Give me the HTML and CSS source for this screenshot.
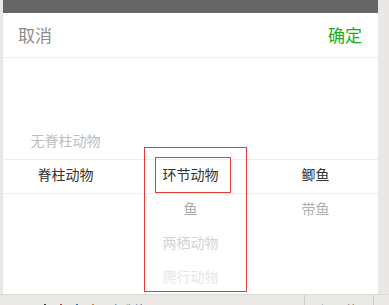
FILE: index.html
```html
<!DOCTYPE html>
<html lang="zh">
<head>
<meta charset="utf-8">
<link rel="stylesheet" href="styles.css">
</head>
<body>
<div class="screen">
  <div class="side side-left"></div>
  <div class="panel">
    <div class="topbar"></div>
    <div class="header">
      <span class="cancel">取消</span>
      <span class="ok">确定</span>
    </div>
    <div class="picker">
      <div class="col col-left">
        <div class="item near">无脊柱动物</div>
        <div class="item sel">脊柱动物</div>
      </div>
      <div class="col col-mid">
        <div class="item sel">环节动物</div>
        <div class="item near1">鱼</div>
        <div class="item far">两栖动物</div>
        <div class="item farther">爬行动物</div>
      </div>
      <div class="col col-right">
        <div class="item sel">鲫鱼</div>
        <div class="item near2">带鱼</div>
      </div>
      <div class="indicator"></div>
    </div>
  </div>
  <div class="side side-right"></div>
  <div class="hl hl-outer"></div>
  <div class="hl hl-inner"></div>
</div>
<div class="bottombar">
  <div class="bb-left">
    <span class="dot d1"></span><span class="dot d2"></span><span class="dot d3"></span><span class="dot d4"></span>
    <span class="link">复制打开</span>
  </div>
  <div class="bb-mid">经目值</div>
  <div class="bb-right"></div>
</div>
</body>
</html>
```

FILE: styles.css
```css
* { box-sizing: border-box; }
html, body {
  margin: 0;
  padding: 0;
  width: 389px;
  height: 305px;
  overflow: hidden;
  background: #ebe9e5;
  font-family: "Noto Sans CJK SC", "Noto Sans", sans-serif;
}
.screen {
  position: relative;
  display: flex;
  height: 294px;
}
.side {
  background: #e9e8e4;
}
.side-left { width: 3px; }
.side-right { width: 11px; }
.panel {
  width: 375px;
  display: flex;
  flex-direction: column;
  background: #fff;
}
.topbar {
  height: 13px;
  background: #666;
}
.header {
  height: 45px;
  display: flex;
  align-items: center;
  justify-content: space-between;
  padding: 0 16px 2px 15px;
  border-bottom: 1px solid #eeeeee;
  font-size: 17px;
}
.cancel { color: #8c8c8c; }
.ok { color: #1aad19; }
.picker {
  position: relative;
  flex: 1;
  display: flex;
  overflow: hidden;
}
.col {
  width: 125px;
  display: flex;
  flex-direction: column;
}
.col-left { padding-top: 66px; }
.col-mid, .col-right { padding-top: 100px; }
.item {
  height: 34px;
  line-height: 32px;
  text-align: center;
  font-size: 14px;
  color: #333;
}
.item.near { color: #bdbdbd; }
.item.near1 { color: #a8a8a8; }
.item.near2 { color: #b0b0b0; }
.item.far { color: #d4d4d4; }
.item.farther { color: #e6e6e6; }
.indicator {
  position: absolute;
  left: 0;
  right: 0;
  top: 101px;
  height: 35px;
  border-top: 1px solid #eeeeee;
  border-bottom: 1px solid #eeeeee;
  pointer-events: none;
}
.hl {
  position: absolute;
  border: 1px solid #e83a3a;
  pointer-events: none;
}
.hl-outer {
  left: 144px;
  top: 147px;
  width: 103px;
  height: 145px;
}
.hl-inner {
  left: 155px;
  top: 157px;
  width: 76px;
  height: 36px;
}
.bottombar {
  height: 11px;
  border-top: 1px solid #dcdad6;
  display: flex;
  overflow: hidden;
  font-size: 13px;
  line-height: 13px;
}
.bb-left {
  width: 304px;
  display: flex;
  align-items: flex-start;
  padding: 8px 0 0 44px;
  gap: 14px;
}
.dot {
  width: 2px;
  height: 4px;
  margin-top: 1px;
}
.d1 { background: #333; }
.d2 { background: #c0392b; }
.d3 { background: #2c6fb5; }
.d4 { background: #d9822b; }
.link {
  color: #3c6eb4;
  margin-left: 4px;
}
.bb-mid {
  width: 70px;
  border-left: 1px solid #cfcdc9;
  border-right: 1px solid #cfcdc9;
  color: #777;
  padding: 8px 0 0 14px;
}
.bb-right { flex: 1; }
```
